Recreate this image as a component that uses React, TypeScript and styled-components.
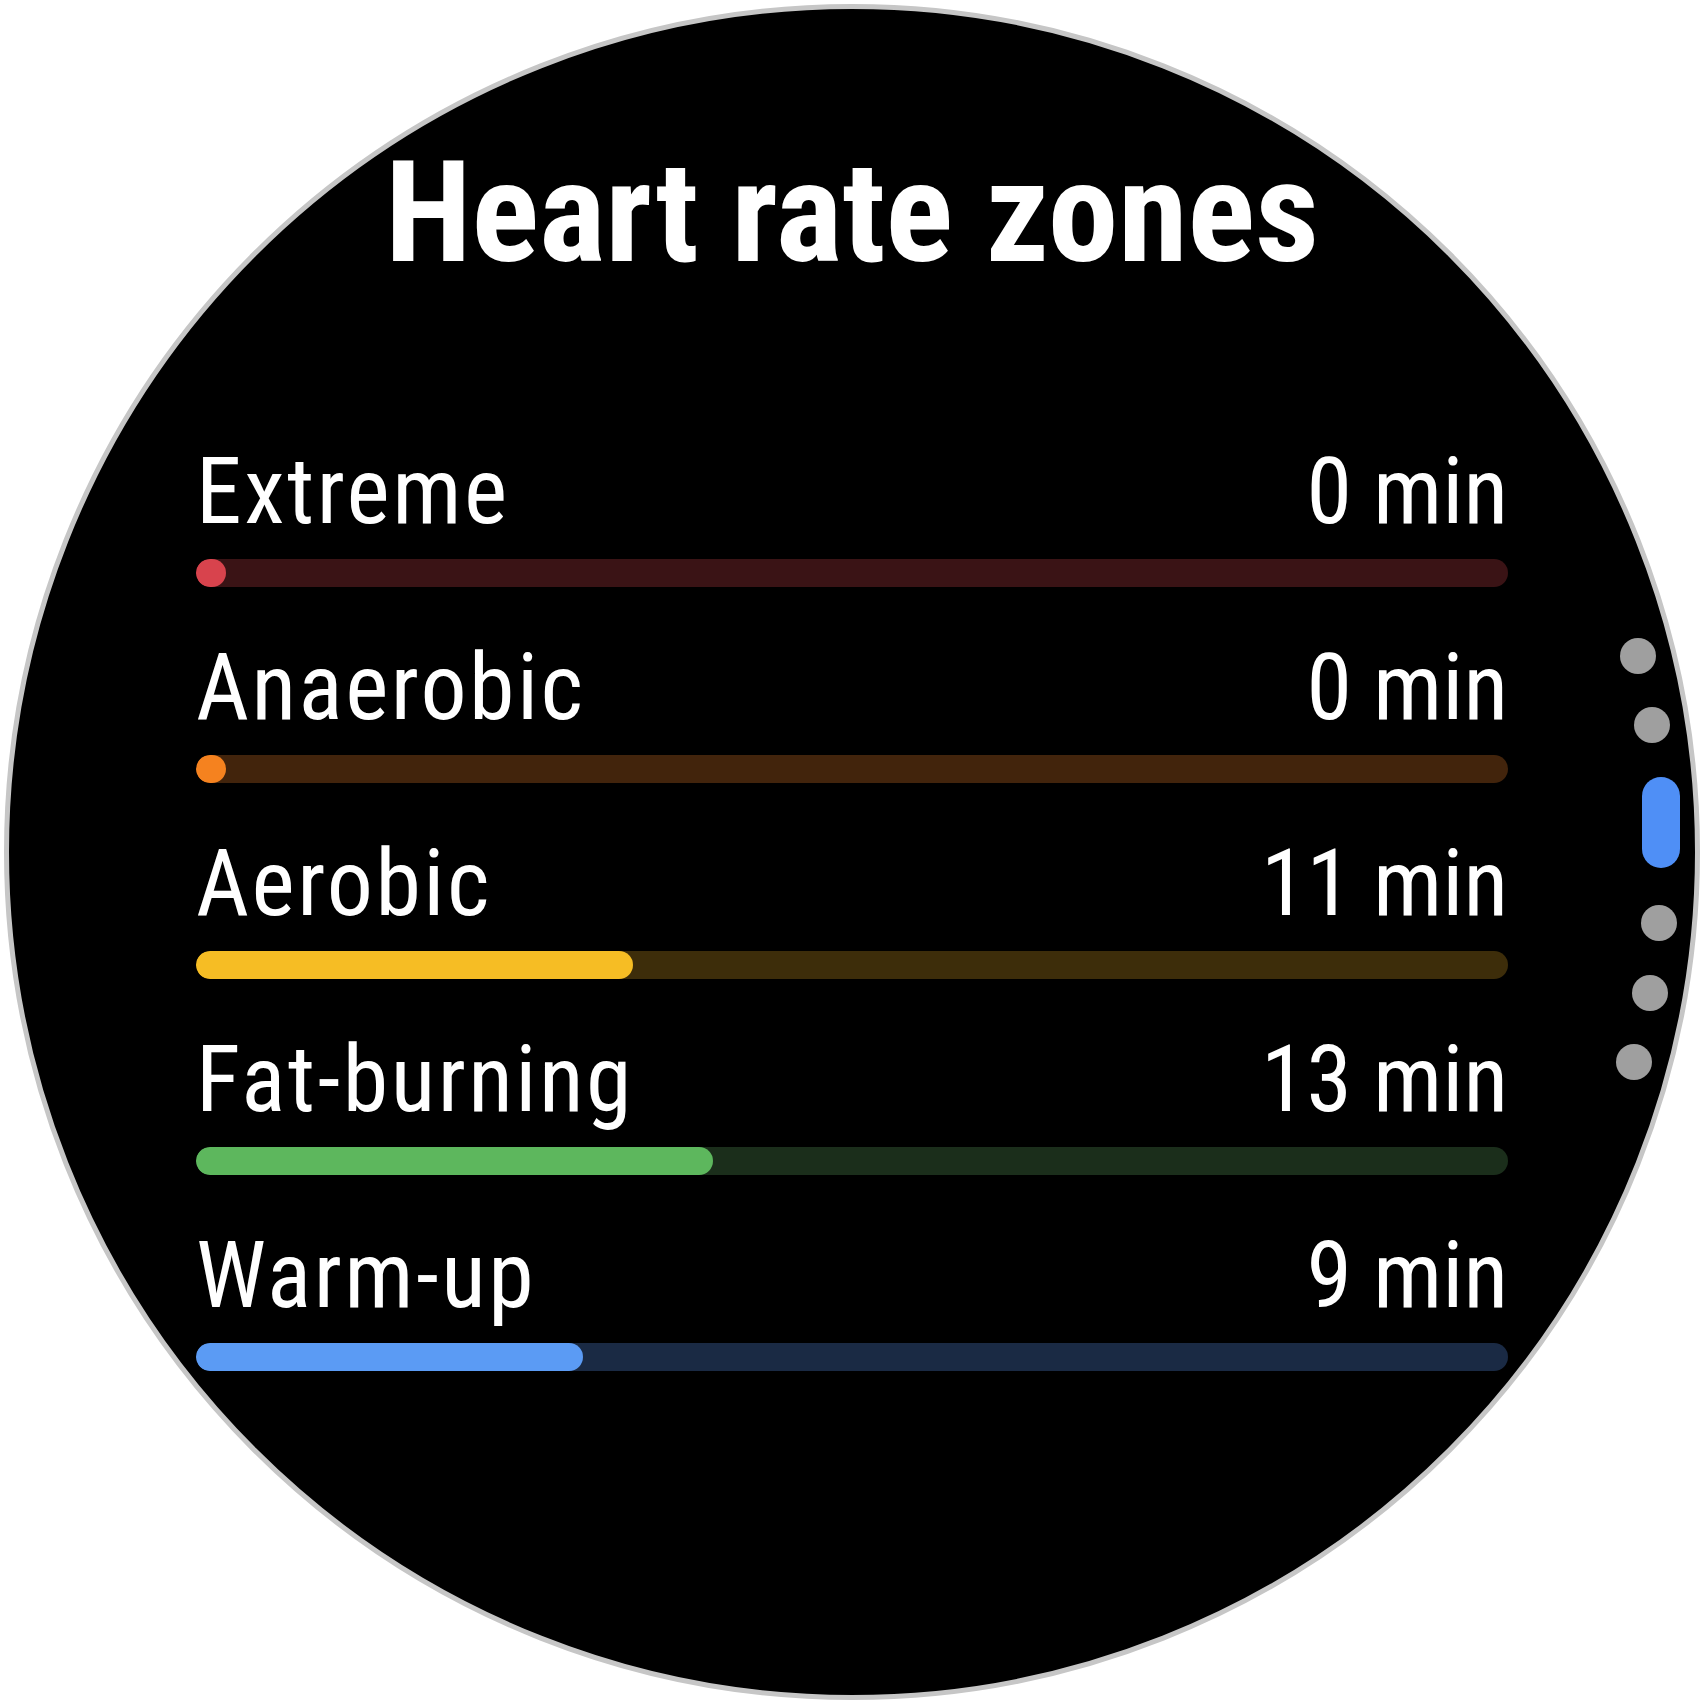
import React from "react";
import styled, { createGlobalStyle } from "styled-components";

const GlobalStyle = createGlobalStyle`
  html, body {
    margin: 0;
    padding: 0;
    background: #ffffff;
  }
  #root {
    width: 1704px;
    height: 1704px;
  }
`;

const Frame = styled.div`
  width: 1704px;
  height: 1704px;
  display: flex;
  align-items: center;
  justify-content: center;
  background: #ffffff;
`;

const Watch = styled.div`
  position: relative;
  box-sizing: border-box;
  width: 1696px;
  height: 1696px;
  border-radius: 50%;
  border: 5px solid #c6c6c6;
  background: #000000;
  display: flex;
  flex-direction: column;
  align-items: stretch;
  padding: 132px 187px 0;
  font-family: Roboto, "Noto Sans", "Liberation Sans", sans-serif;
  font-stretch: 75%;
  color: #ffffff;
  overflow: hidden;
`;

const Title = styled.h1`
  margin: 0;
  font-size: 141px;
  line-height: 143px;
  font-weight: 700;
  text-align: center;
  letter-spacing: 0;
`;

const ZoneList = styled.div`
  margin-top: 162px;
  display: flex;
  flex-direction: column;
  gap: 55px;
`;

const ZoneRow = styled.div`
  display: flex;
  flex-direction: column;
  gap: 21px;
`;

const ZoneHeader = styled.div`
  display: flex;
  justify-content: space-between;
  align-items: baseline;
  font-size: 92px;
  line-height: 92px;
  font-weight: 400;
`;

const ZoneName = styled.span`
  letter-spacing: 2.5px;
`;

const ZoneValue = styled.span`
  text-align: right;
`;

const Track = styled.div<{ $track: string }>`
  position: relative;
  height: 28px;
  border-radius: 14px;
  background: ${(p) => p.$track};
  overflow: hidden;
`;

const Fill = styled.div<{ $fill: string }>`
  height: 100%;
  min-width: 30px;
  border-radius: 14px;
  background: ${(p) => p.$fill};
`;

const Indicator = styled.div`
  position: absolute;
  inset: 0;
  pointer-events: none;
`;

const Dot = styled.span`
  position: absolute;
  width: 36px;
  height: 36px;
  margin: -18px 0 0 -18px;
  border-radius: 50%;
  background: #9f9f9f;
`;

const ActivePill = styled.span`
  position: absolute;
  width: 38px;
  height: 91px;
  margin: -45.5px 0 0 -19px;
  border-radius: 19px;
  background: #4f8ff6;
`;

type Zone = {
  name: string;
  minutes: number;
  pct: number;
  fill: string;
  track: string;
};

const zones: Zone[] = [
  { name: "Extreme", minutes: 0, pct: 0, fill: "#d8434d", track: "#3a1315" },
  { name: "Anaerobic", minutes: 0, pct: 0, fill: "#f5821f", track: "#42240c" },
  { name: "Aerobic", minutes: 11, pct: 33.3, fill: "#f6bd24", track: "#3d2d0a" },
  { name: "Fat-burning", minutes: 13, pct: 39.4, fill: "#5db75d", track: "#1b2e1b" },
  { name: "Warm-up", minutes: 9, pct: 29.5, fill: "#5b9bf4", track: "#1a2a44" },
];

const CENTER = 843;
const RADIUS = 810;
const dotAngles = [-14, -9, 5, 10, 15];
const pillAngle = -2.1;

const polar = (deg: number) => {
  const r = (deg * Math.PI) / 180;
  return { left: CENTER + RADIUS * Math.cos(r), top: CENTER + RADIUS * Math.sin(r) };
};

export default function App() {
  return (
    <>
      <GlobalStyle />
      <Frame>
        <Watch>
          <Title>Heart rate zones</Title>
          <ZoneList>
            {zones.map((z) => (
              <ZoneRow key={z.name}>
                <ZoneHeader>
                  <ZoneName>{z.name}</ZoneName>
                  <ZoneValue>{z.minutes} min</ZoneValue>
                </ZoneHeader>
                <Track $track={z.track}>
                  <Fill $fill={z.fill} style={{ width: `${z.pct}%` }} />
                </Track>
              </ZoneRow>
            ))}
          </ZoneList>
          <Indicator>
            {dotAngles.map((a) => (
              <Dot key={a} style={polar(a)} />
            ))}
            <ActivePill style={polar(pillAngle)} />
          </Indicator>
        </Watch>
      </Frame>
    </>
  );
}
